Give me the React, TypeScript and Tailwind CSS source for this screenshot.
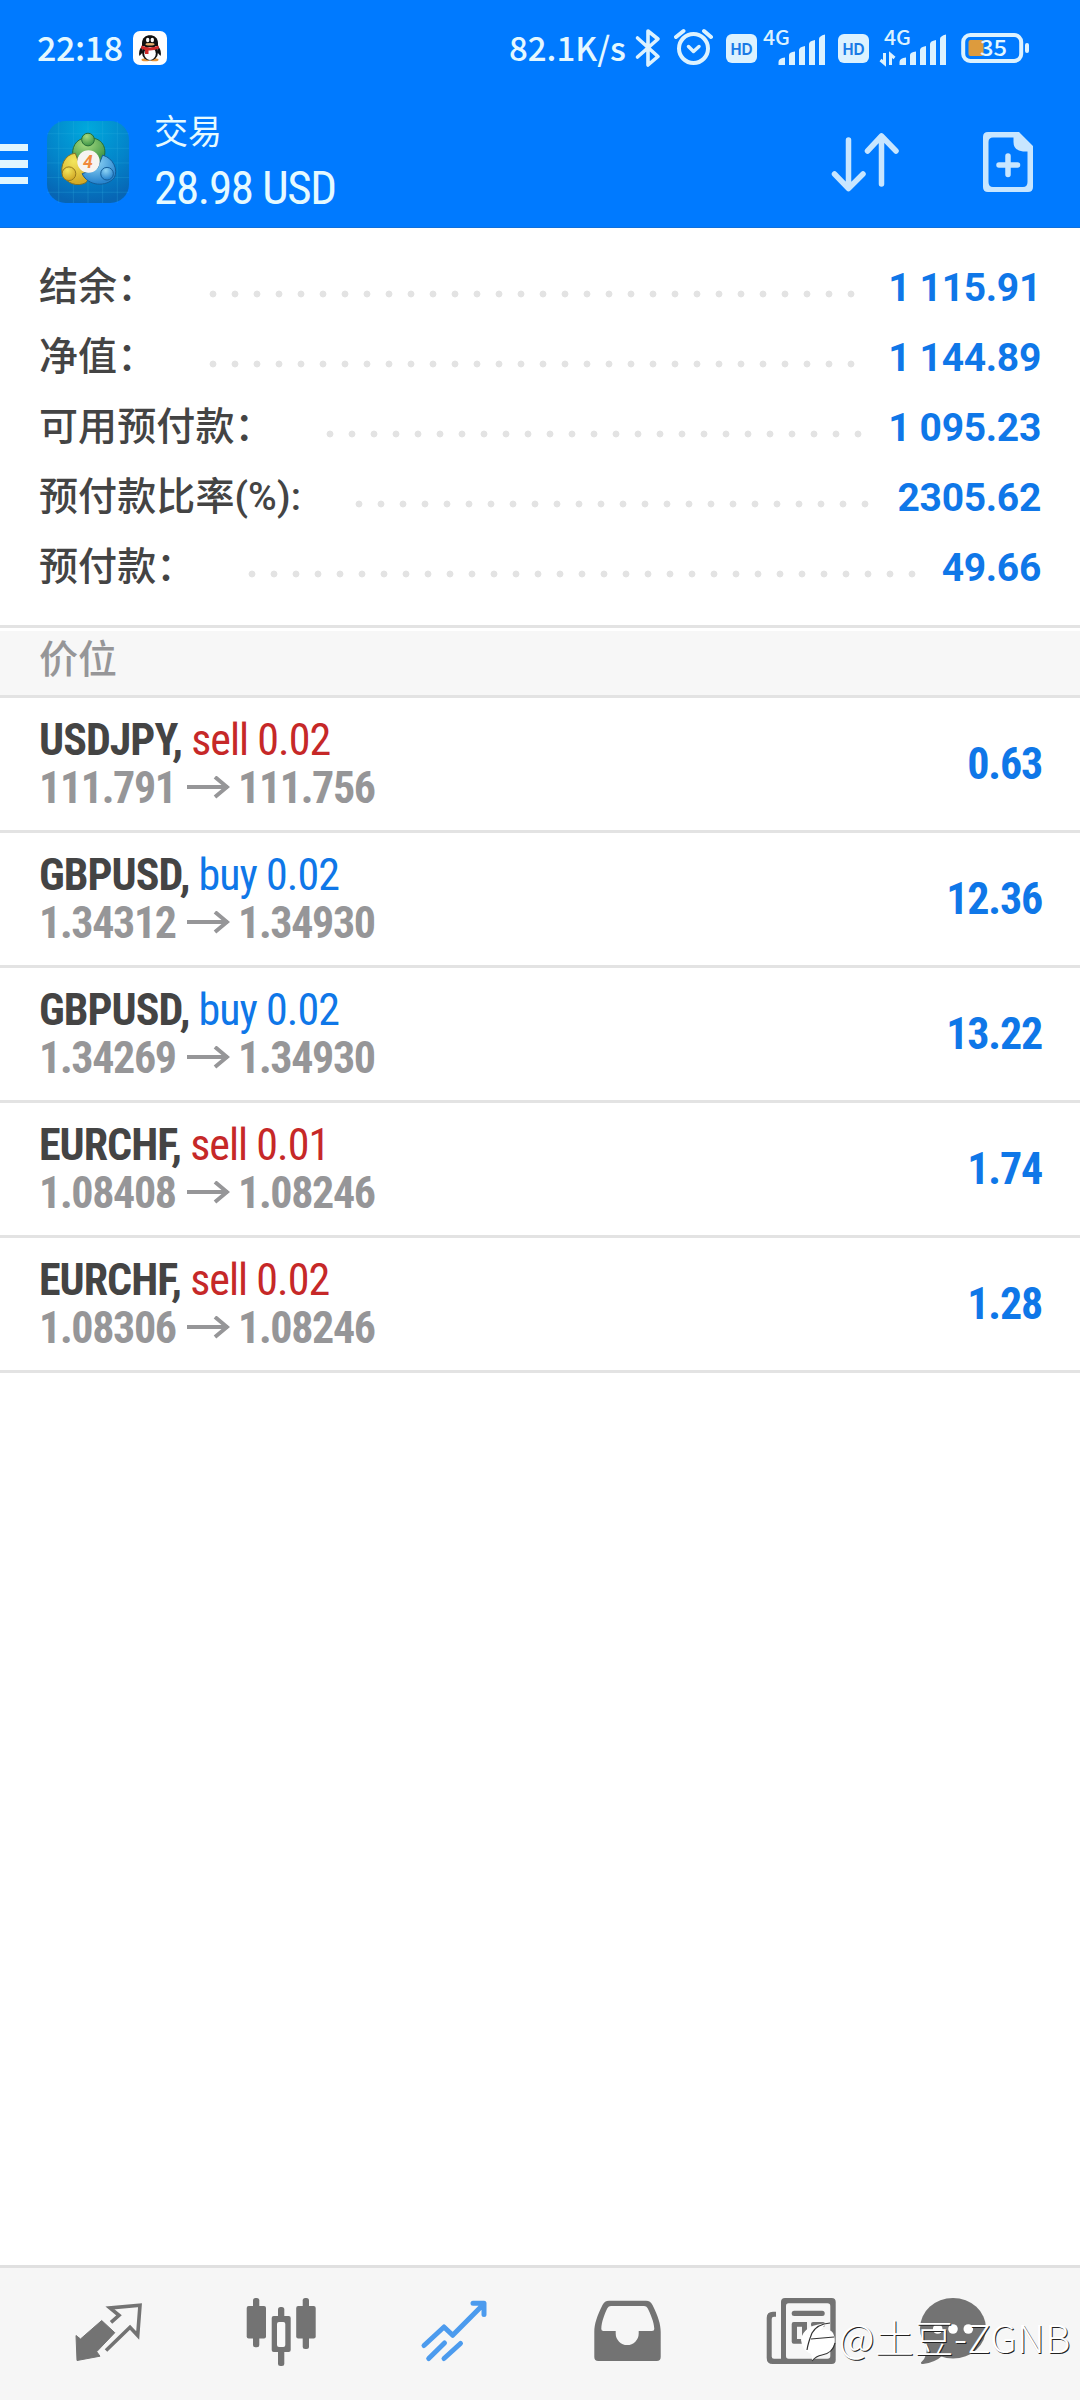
import type { ReactNode } from 'react';

interface SummaryRow {
  label: string;
  value: string;
  labelWidth: string;
  dotsWidth: string;
}

interface Position {
  symbol: string;
  side: 'buy' | 'sell';
  volume: string;
  open: string;
  current: string;
  profit: string;
}

const summary: SummaryRow[] = [
  { label: '结余：', value: '1 115.91', labelWidth: 'w-[163px]', dotsWidth: 'w-[660px]' },
  { label: '净值：', value: '1 144.89', labelWidth: 'w-[163px]', dotsWidth: 'w-[660px]' },
  { label: '可用预付款：', value: '1 095.23', labelWidth: 'w-[280px]', dotsWidth: 'w-[550px]' },
  { label: '预付款比率(%):', value: '2305.62', labelWidth: 'w-[309px]', dotsWidth: 'w-[528px]' },
  { label: '预付款：', value: '49.66', labelWidth: 'w-[202px]', dotsWidth: 'w-[682px]' },
];

const positions: Position[] = [
  { symbol: 'USDJPY', side: 'sell', volume: '0.02', open: '111.791', current: '111.756', profit: '0.63' },
  { symbol: 'GBPUSD', side: 'buy', volume: '0.02', open: '1.34312', current: '1.34930', profit: '12.36' },
  { symbol: 'GBPUSD', side: 'buy', volume: '0.02', open: '1.34269', current: '1.34930', profit: '13.22' },
  { symbol: 'EURCHF', side: 'sell', volume: '0.01', open: '1.08408', current: '1.08246', profit: '1.74' },
  { symbol: 'EURCHF', side: 'sell', volume: '0.02', open: '1.08306', current: '1.08246', profit: '1.28' },
];

function QQIcon() {
  return (
    <svg className="ml-[10px] h-[34px] w-[34px]" viewBox="0 0 34 34">
      <rect width="34" height="34" rx="7" fill="#fff" />
      <path d="M9 15 Q5 20 6.5 25 L10 21Z M25 15 Q29 20 27.500 25 L24 21Z" fill="#111" />
      <ellipse cx="12.500" cy="28.700" rx="4" ry="1.500" fill="#e8963a" />
      <ellipse cx="21.500" cy="28.700" rx="4" ry="1.500" fill="#e8963a" />
      <ellipse cx="17" cy="21.500" rx="8" ry="8" fill="#111" />
      <ellipse cx="17" cy="22.500" rx="5.800" ry="6.500" fill="#fff" />
      <path d="M9 15 V12 C9 1.500 25 1.500 25 12 V15Z" fill="#111" />
      <path d="M8.500 14.500 Q17 18.500 25.500 14.500 L26 17.500 Q20 20 15.500 19.500 V23 H12 V19 L8 17.500Z" fill="#d02a2a" />
      <ellipse cx="14.700" cy="9" rx="1.700" ry="2.300" fill="#fff" />
      <ellipse cx="19.300" cy="9" rx="1.700" ry="2.300" fill="#fff" />
      <ellipse cx="17" cy="13.200" rx="4.600" ry="1.300" fill="#e8b070" />
    </svg>
  );
}

function HdBadge() {
  return (
    <svg className="h-[29px] w-[31px]" viewBox="0 0 31 29">
      <rect width="31" height="29" rx="6" fill="#dcf2ff" />
      <text x="15.500" y="20.500" textAnchor="middle" textLength="22" lengthAdjust="spacingAndGlyphs" fill="#1a7ae6" className="font-[Lato] text-[17px] font-black">
        HD
      </text>
    </svg>
  );
}

function Signal({ data = false }: { data?: boolean }) {
  return (
    <svg className="h-[44px] w-[69px]" viewBox="0 -6 69 44" fill="#dcf2ff">
      <text x="5" y="16" textLength="27" lengthAdjust="spacingAndGlyphs" className="font-['Noto_Sans_CJK_SC'] text-[20px] font-medium">
        4G
      </text>
      {data && (
        <path d="M5.500 24 V34.500 L1.500 31 M11.500 36 V25.500 L15.500 29" fill="none" stroke="#dcf2ff" strokeWidth="3" />
      )}
      <path d="M20.500 36 V33 Q20.500 29 27 28.500 V36Z" />
      <path d="M31 36 V26 Q31 23 37 22.500 V36Z" />
      <path d="M41 36 V21 Q41 18 47 17 V36Z" />
      <path d="M51 36 V15 Q51 12 57 11 V36Z" />
      <path d="M61 36 V10 Q61 7 67 5.500 V36Z" />
    </svg>
  );
}

function StatusBar() {
  return (
    <div className="flex h-[96px] items-center text-[#e4f8ff]">
      <div className="flex w-[509px] items-center pl-[37px]">
        <span className="w-[86px] whitespace-nowrap pb-[2px] font-['Noto_Sans_CJK_SC',sans-serif] text-[34px] leading-[34px] font-medium tracking-[-0.4px]">22:18</span>
        <QQIcon />
      </div>
      <span className="w-[119px] whitespace-nowrap pb-[2px] font-['Noto_Sans_CJK_SC',sans-serif] text-[33px] leading-[34px] font-medium">82.1K/s</span>
      <svg className="ml-[6px] h-[42px] w-[28px]" viewBox="0 0 28 42" fill="none" stroke="#dcf2ff" strokeWidth="3.600" strokeLinejoin="round" strokeLinecap="round">
        <path d="M3.500 11 L24 29.500 L14 38 V4 L24 12 L3.500 30" />
      </svg>
      <svg className="ml-[12px] h-[40px] w-[40px]" viewBox="0 0 40 40" fill="none" stroke="#dcf2ff" strokeLinecap="round">
        <circle cx="19.500" cy="20.500" r="14.500" strokeWidth="4" />
        <path d="M14.500 18.500 L19.500 23.500 L25 18.500" strokeWidth="3.500" strokeLinejoin="round" />
        <path d="M2 9 L9.500 3 M30 3 L37 9" strokeWidth="4" />
      </svg>
      <div className="ml-[12px] flex items-center">
        <HdBadge />
        <div className="ml-px pb-[7px]"><Signal /></div>
      </div>
      <div className="ml-[11px] flex items-center">
        <HdBadge />
        <div className="ml-[10px] pb-[7px]"><Signal data /></div>
      </div>
      <svg className="ml-[13px] h-[42px] w-[69px]" viewBox="0 -6 69 42">
        <rect x="2.200" y="2" width="58" height="26" rx="7" fill="none" stroke="#dcf2ff" strokeWidth="4" />
        <rect x="64" y="10" width="4" height="10" rx="2" fill="#dcf2ff" />
        <rect x="7.500" y="7" width="15" height="16" rx="2" fill="#dd9b3d" />
        <text x="19" y="23" textLength="27" lengthAdjust="spacingAndGlyphs" fill="#e4f8ff" className="font-['Noto_Sans_CJK_SC'] text-[22px] font-medium">
          35
        </text>
      </svg>
    </div>
  );
}

function AppLogo() {
  return (
    <svg className="ml-[19px] h-[82px] w-[82px]" viewBox="0 0 84 84">
      <defs>
        <radialGradient id="logo-bg" cx="0.5" cy="0.1" r="0.9">
          <stop offset="0" stopColor="#00a9dd" />
          <stop offset="0.6" stopColor="#0383c9" />
          <stop offset="1" stopColor="#0765b4" />
        </radialGradient>
        <radialGradient id="logo-green" cx="0.4" cy="0.25" r="0.7">
          <stop offset="0" stopColor="#a6da80" />
          <stop offset="1" stopColor="#43994a" />
        </radialGradient>
        <radialGradient id="logo-yellow" cx="0.4" cy="0.25" r="0.7">
          <stop offset="0" stopColor="#f3e65c" />
          <stop offset="1" stopColor="#d3ab28" />
        </radialGradient>
        <radialGradient id="logo-blue" cx="0.4" cy="0.25" r="0.7">
          <stop offset="0" stopColor="#8ed4f5" />
          <stop offset="1" stopColor="#2a86cf" />
        </radialGradient>
      </defs>
      <rect width="84" height="84" rx="19" fill="url(#logo-bg)" />
      <path d="M12 0V84 M27 0V84 M42 0V84 M57 0V84 M72 0V84 M0 13H84 M0 28H84 M0 43H84 M0 58H84 M0 73H84" stroke="#35b5e2" strokeOpacity="0.25" />
      <path d="M36 18 C27 21 24 32 28 40 L56 42 C63 31 58 20 49 18Z" fill="url(#logo-green)" stroke="#256b35" />
      <path d="M29 33 C18 34 13 47 16 55 C20 64 31 68 40 63 L46 54 L33 44Z" fill="url(#logo-yellow)" stroke="#806f24" />
      <path d="M57 35 C68 38 73 50 69 58 C61 68 42 67 36 54 L52 48Z" fill="url(#logo-blue)" stroke="#155c96" />
      <circle cx="42" cy="19" r="6.500" fill="url(#logo-green)" stroke="#256b35" />
      <circle cx="22.500" cy="54" r="7" fill="url(#logo-yellow)" stroke="#94771d" />
      <circle cx="61.500" cy="54" r="6.500" fill="url(#logo-blue)" stroke="#155c96" />
      <circle cx="42.500" cy="41.500" r="11.500" fill="#f6f4f1" />
      <text x="42" y="48" textAnchor="middle" fill="#f08a3c" className="font-[Roboto] text-[18px] font-bold italic">
        4
      </text>
    </svg>
  );
}

function AppBar() {
  return (
    <div className="flex h-[131px] items-center">
      <div className="mt-[5px] flex w-[28px] flex-col gap-[9px]">
        <div className="h-[7.500px] bg-[#e0f6ff]" />
        <div className="h-[7.500px] bg-[#e0f6ff]" />
        <div className="h-[7.500px] bg-[#e0f6ff]" />
      </div>
      <AppLogo />
      <div className="flex flex-1 flex-col pl-[25px] text-[#e6faff]">
        <h1 className="font-['Noto_Sans_CJK_SC',sans-serif] text-[34px] leading-[52px]">交易</h1>
        <p className="font-[Roboto,sans-serif] text-[47px] leading-[63px] tracking-[-1.3px] [font-stretch:75%]">28.98 USD</p>
      </div>
      <svg className="h-[64px] w-[68px]" viewBox="0 0 68 64" fill="none" stroke="#c8e6ff" strokeWidth="5.500" strokeLinecap="round" strokeLinejoin="round">
        <path d="M17.500 10 V58 M3.500 44 L17.500 58.500 L32 44" />
        <path d="M50.500 54 V6 M36.500 21 L50.500 6 L65 21" />
      </svg>
      <svg className="mr-[46px] ml-[83px] h-[62px] w-[52px]" viewBox="0 0 52 62">
        <path fillRule="evenodd" d="M6 1 H37 L51 15 V56 Q51 61 46 61 H6 Q1 61 1 56 V6 Q1 1 6 1Z M11 6.500 Q6.500 6.500 6.500 11 V51 Q6.500 56 11 56 H41 Q45.500 56 45.500 51 V20.500 H41 Q31.500 19.500 31.500 11 V6.500Z" fill="#c8e6ff" />
        <path d="M26 25 V43.500 M17 34 H35.500" stroke="#c8e6ff" strokeWidth="5.500" strokeLinecap="round" />
      </svg>
    </div>
  );
}

function Summary() {
  return (
    <section className="h-[397px] pt-[24px]">
      {summary.map((row) => (
        <div key={row.label} className="flex h-[70px] items-center pr-[39px] pl-[39px]">
          <span className={`${row.labelWidth} shrink-0 whitespace-nowrap font-[Roboto,'Noto_Sans_CJK_SC',sans-serif] text-[39px] leading-[69px] font-medium tracking-[0.1px] text-[#444]`}>
            {row.label}
          </span>
          <span className={`${row.dotsWidth} mt-[14px] h-[22px] bg-[radial-gradient(circle,#e3e3e3_3px,transparent_3.8px)] bg-[size:22px_22px]`} />
          <span className="ml-auto pt-[2px] font-[Roboto,sans-serif] text-[39px] leading-[68px] font-bold tracking-[-0.3px] text-[#0f77e8]">{row.value}</span>
        </div>
      ))}
    </section>
  );
}

function PositionRow({ position }: { position: Position }) {
  return (
    <li className="flex h-[135px] items-center border-b-3 border-[#e3e3e3] pr-[38px] pl-[39px] font-[Roboto,sans-serif] [font-stretch:75%]">
      <div className="flex-1 text-[44px] leading-[48px]">
        <div className="tracking-[-0.98px]">
          <span className="font-bold text-[#444]">{position.symbol},</span>{' '}
          <span className={position.side === 'buy' ? 'text-[#0f77e8]' : 'text-[#c62828]'}>
            {position.side} {position.volume}
          </span>
        </div>
        <div className="flex items-center font-bold tracking-[-1.35px] text-[#969698]">
          <span className="w-[148px]">{position.open}</span>
          <svg className="mr-[8px] h-[24px] w-[43px]" viewBox="0 0 43 24" fill="none" stroke="currentColor" strokeWidth="4">
            <path d="M0 11 H41 M28 1 L40 11 L28 21" />
          </svg>
          <span>{position.current}</span>
        </div>
      </div>
      <span className="text-[44px] font-bold tracking-[-1.2px] text-[#0f77e8]">{position.profit}</span>
    </li>
  );
}

function NavItem({ children, active = false, last = false }: { children: ReactNode; active?: boolean; last?: boolean }) {
  return (
    <div className={`${last ? 'w-[133px]' : 'w-[173px]'} ${active ? 'text-[#4c9bee]' : 'text-[#737373]'} flex justify-center pt-[28px]`}>
      <svg className="h-[72px] w-[73px]" viewBox="0 0 73 72" fill="currentColor">
        {children}
      </svg>
    </div>
  );
}

function BottomNav() {
  return (
    <nav className="relative flex h-[135px] border-t-3 border-[#e0e0e0] bg-[#f6f6f6] pl-[22px]">
      <NavItem>
        <path d="M4 39.500 L8.500 43 L29.700 24.500 L42.800 36.700 L24.700 55.700 L28 60.200 L5 64.500 Z" stroke="currentColor" strokeLinejoin="round" />
        <path d="M39 26.300 L47 19.300 L38 12 L68 9.300 L65.700 39.500 L58 31.300 L34 54.500" fill="none" stroke="currentColor" strokeWidth="3.600" />
      </NavItem>
      <NavItem>
        <rect x="8" y="2" width="6.300" height="49.300" rx="2.500" />
        <rect x="1.700" y="10" width="19.300" height="32.500" rx="2" />
        <rect x="57.700" y="2" width="6.300" height="51" rx="2.500" />
        <rect x="51.200" y="10" width="19.500" height="32.500" rx="2" />
        <rect x="33" y="11" width="6.300" height="59" rx="2.500" />
        <rect x="26.700" y="20" width="19" height="36" rx="2" />
        <rect x="32" y="26" width="8.300" height="25" rx="2" fill="#f8f8f8" />
      </NavItem>
      <NavItem active>
        <g fill="none" stroke="currentColor" strokeWidth="5" strokeLinecap="round" strokeLinejoin="round">
          <path d="M6 49.500 L26 31 L34.700 39.300 L65.300 8.500 M55 7.300 H66 V18.500" />
          <path d="M10.700 62.500 L26.500 47 M26 62.500 L42.500 47.500" />
        </g>
      </NavItem>
      <NavItem>
        <path fillRule="evenodd" d="M18 4.700 H55 Q59.500 4.700 61.500 9 C67 20 69.700 28 69.700 36 V61 Q69.700 65 65.700 65 H7.300 Q3.300 65 3.300 61 V36 C3.300 28 6 20 11.500 9 Q13.500 4.700 18 4.700Z M20 10 Q17.500 10 16.500 12 C13.500 18 10.500 26 10.300 33 Q10.300 35 12.500 35 H24.700 V37.500 A11.500 11.500 0 0 0 47.700 37.500 V35 H61 Q63.300 35 63.300 33 C63 26 59.500 18 56.500 12 Q55.500 10 53 10Z" />
      </NavItem>
      <NavItem>
        <path fillRule="evenodd" d="M21 2 H67.700 Q71.700 2 71.700 6 V64 Q71.700 68 67.700 68 H8.700 Q2.700 68 2.700 62 V22 Q2.700 15.700 9 15.700 H12 V20.700 H10 Q7.700 20.700 7.700 23 V60.500 Q7.700 62.700 10 62.700 H17 V6 Q17 2 21 2Z M24.500 7.300 Q22 7.300 22 10 V60 Q22 62.700 24.500 62.700 H63.500 Q66.300 62.700 66.300 60 V10 Q66.300 7.300 63.500 7.300Z" />
        <rect x="27.700" y="14.700" width="33" height="5.300" rx="2.500" />
        <path fillRule="evenodd" d="M29.700 26 H43 V47.700 H29.700 Q27.700 47.700 27.700 45.700 V28 Q27.700 26 29.700 26Z M33 30.700 V43 H38 V30.700Z" />
        <rect x="47" y="26" width="14" height="5" rx="2" />
        <rect x="47" y="42" width="14" height="5" rx="2" />
      </NavItem>
      <NavItem last>
        <ellipse cx="36" cy="32.300" rx="33" ry="30.300" />
        <path d="M9 48 Q12 59 4 66.500 Q3.500 68.300 6 68 Q18 66.500 25 60Z" />
        <g fill="#fff">
          <circle cx="20.700" cy="33" r="4.800" />
          <circle cx="36" cy="33" r="4.800" />
          <circle cx="51.300" cy="33" r="4.800" />
        </g>
      </NavItem>

      {/* author watermark */}
      <div className="absolute top-[42px] left-[799px] flex items-center text-white">
        <svg className="mt-[8px] h-[44px] w-[38px]" viewBox="0 0 38 44">
          <path d="M2 22 Q4 6 31 5 Q24 7 22 12 Q31 10 34 15 Q37 21 35 27 Q32 35 23 38 Q17 38 13 43 Q13 38 12 36 Q3 32 2 22Z" fill="#fff" />
          <path d="M31 5 Q18 6 13 15 Q9 25 8 32 M12 21 L35 19 M36 25 Q34 35 23 37 Q17 38 13 43" fill="none" stroke="#333" strokeWidth="1.200" />
        </svg>
        <span className="ml-[2px] whitespace-nowrap font-['Noto_Sans_CJK_SC',sans-serif] text-[39px] leading-[48px] font-light tracking-[0.5px] [text-shadow:1px_1px_0_#222]">@土豆-ZGNB</span>
      </div>
    </nav>
  );
}

export default function App() {
  return (
    <main className="flex h-[2400px] w-[1080px] flex-col overflow-hidden bg-white">
      <header className="h-[228px] border-b border-[#1070dc] bg-[#007aff]">
        <StatusBar />
        <AppBar />
      </header>
      <Summary />
      <h2 className="h-[73px] border-y-3 border-[#e3e3e3] bg-white pt-[3px]">
        <div className="h-[64px] bg-[#f7f7f7] pl-[39px] font-['Noto_Sans_CJK_SC',sans-serif] text-[39px] leading-[51px] font-medium text-[#969698]">价位</div>
      </h2>
      <ul className="flex-1">
        {positions.map((position) => (
          <PositionRow key={`${position.symbol}-${position.open}`} position={position} />
        ))}
      </ul>
      <BottomNav />
    </main>
  );
}
